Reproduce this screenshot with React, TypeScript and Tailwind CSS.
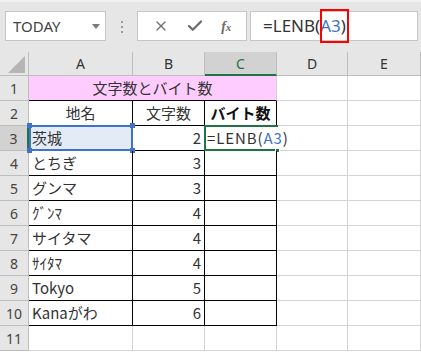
import React from "react";
import { X, Check } from "lucide-react";

const cellFont = { fontFamily: '"Noto Sans CJK JP", "Noto Sans", sans-serif' };
const uiFont = { fontFamily: '"Noto Sans", "Noto Sans CJK JP", sans-serif' };

const data: [string, string][] = [
  ["茨城", "2"],
  ["とちぎ", "3"],
  ["グンマ", "3"],
  ["ｸﾞﾝﾏ", "4"],
  ["サイタマ", "4"],
  ["ｻｲﾀﾏ", "4"],
  ["Tokyo", "5"],
  ["Kanaがわ", "6"],
];

function RowHead({ n, sel = false }: { n: number; sel?: boolean }) {
  return (
    <div
      className={
        sel
          ? "h-[25px] flex items-center justify-center bg-[#d2d2d2] border-b border-[#bdbdbd] border-r-2 border-r-[#217346] text-[14px] text-[#444]"
          : "h-[25px] flex items-center justify-center bg-[#e6e6e6] border-b border-r border-[#bdbdbd] text-[14px] text-[#444]"
      }
      style={uiFont}
    >
      {n}
    </div>
  );
}

export default function App() {
  return (
    <div className="w-[421px] h-[352px] overflow-hidden bg-white relative" style={uiFont}>
      {/* toolbar */}
      <div className="h-[52px] bg-[#e6e6e6] border-t-2 border-[#f2f2f2] flex items-start pt-[9px] pl-[5px]">
        <div className="w-[101px] h-[30px] bg-white border border-[#c6c6c6] flex items-center pl-[7px] pr-[5px] text-[15px] text-[#444]">
          <span className="flex-1">TODAY</span>
          <svg width="8" height="5" viewBox="0 0 8 5">
            <path d="M0 0 L8 0 L4 5 Z" fill="#7a7a7a" />
          </svg>
        </div>
        <div className="ml-[15px] mt-[10px] flex flex-col gap-[3px]">
          <div className="w-[2px] h-[2px] bg-[#9a9a9a]" />
          <div className="w-[2px] h-[2px] bg-[#9a9a9a]" />
          <div className="w-[2px] h-[2px] bg-[#9a9a9a]" />
        </div>
        <div className="ml-[14px] w-[110px] h-[30px] bg-white border border-[#c6c6c6] flex items-center justify-around px-[6px] text-[#6b6b6b]">
          <X size={16} strokeWidth={1.8} />
          <Check size={18} strokeWidth={3} />
          <span className="text-[14px] italic font-semibold" style={{ fontFamily: '"Liberation Serif", serif' }}>
            f<span className="text-[11px]">x</span>
          </span>
        </div>
        <div className="ml-[3px] w-[168px] h-[30px] bg-white border border-[#c6c6c6] relative flex items-center pl-[12px] text-[17px] text-[#333]">
          <span>=LENB(</span>
          <span className="text-[#3f73c8]">A3</span>
          <span>)</span>
          <span className="w-[1px] h-[18px] bg-black ml-[1px]" />
          <div className="absolute left-[69px] top-[-3px] w-[29px] h-[34px] border-2 border-[#ff0000]" />
        </div>
      </div>

      {/* sheet */}
      <div className="grid grid-cols-[29px_104px_72px_72px_71px_73px]" style={cellFont}>
        {/* header row */}
        <div className="h-[24px] bg-[#e6e6e6] border-r border-b border-[#bdbdbd] relative">
          <svg className="absolute right-[3px] bottom-[2px]" width="17" height="17" viewBox="0 0 17 17">
            <path d="M17 0 L17 17 L0 17 Z" fill="#b5b5b5" />
          </svg>
        </div>
        {["A", "B"].map((c) => (
          <div key={c} className="h-[24px] bg-[#e6e6e6] border-r border-b border-[#bdbdbd] flex items-center justify-center text-[14px] text-[#333]" style={uiFont}>
            {c}
          </div>
        ))}
        <div className="h-[24px] bg-[#d2d2d2] border-r border-[#bdbdbd] border-b-2 border-b-[#217346] flex items-center justify-center text-[14px] text-[#217346]" style={uiFont}>
          C
        </div>
        {["D", "E"].map((c) => (
          <div key={c} className="h-[24px] bg-[#e6e6e6] border-r border-b border-[#bdbdbd] flex items-center justify-center text-[14px] text-[#333]" style={uiFont}>
            {c}
          </div>
        ))}

        {/* row 1 */}
        <RowHead n={1} />
        <div className="col-span-3 h-[25px] bg-[#ffccff] border-b border-r border-b-black border-r-[#d4d4d4] flex items-center justify-center text-[15px] text-[#333]">
          文字数とバイト数
        </div>
        <div className="h-[25px] border-r border-b border-[#d4d4d4]" />
        <div className="h-[25px] border-r border-b border-[#d4d4d4]" />

        {/* row 2 */}
        <RowHead n={2} />
        <div className="h-[25px] border-r border-b border-black flex items-center justify-center text-[15px] text-[#333]">地名</div>
        <div className="h-[25px] border-r border-b border-black flex items-center justify-center text-[15px] text-[#333]">文字数</div>
        <div className="h-[25px] border-r border-b border-black flex items-center justify-center text-[15px] font-bold text-[#111]">バイト数</div>
        <div className="h-[25px] border-r border-b border-[#d4d4d4]" />
        <div className="h-[25px] border-r border-b border-[#d4d4d4]" />

        {/* data rows */}
        {data.map(([name, num], i) => {
          const r = i + 3;
          const first = i === 0;
          return (
            <React.Fragment key={r}>
              <RowHead n={r} sel={first} />
              <div className={"h-[25px] border-r border-b border-black flex items-center pl-[3px] text-[15px] text-[#333] whitespace-nowrap relative " + (first ? "bg-[#e3ebf7]" : "")}>
                {name}
                {first && (
                  <div className="absolute -top-[1px] left-0 -right-[1px] -bottom-[1px] border-2 border-[#3f73c8]">
                    <div className="absolute -left-[4px] -top-[4px] w-[5px] h-[5px] bg-[#3f73c8]" />
                    <div className="absolute -right-[4px] -top-[4px] w-[5px] h-[5px] bg-[#3f73c8]" />
                    <div className="absolute -left-[4px] -bottom-[4px] w-[5px] h-[5px] bg-[#3f73c8]" />
                    <div className="absolute -right-[4px] -bottom-[4px] w-[5px] h-[5px] bg-[#3f73c8]" />
                  </div>
                )}
              </div>
              <div className="h-[25px] border-r border-b border-black flex items-center justify-end pr-[3px] text-[15px] text-[#333]">
                {num}
              </div>
              <div className={"h-[25px] border-b border-black relative " + (first ? "" : "border-r")}>
                {first && (
                  <>
                    <div className="absolute -top-[1px] -left-[1px] -right-[1px] -bottom-[1px] border-2 border-r-0 border-[#217346]" />
                    <div className="absolute -right-[3px] -bottom-[3px] w-[5px] h-[5px] bg-[#217346] border border-white" />
                    <div className="absolute left-[2px] top-0 h-[24px] flex items-center whitespace-nowrap text-[15px] tracking-[0.9px] text-[#333] z-10">
                      =LENB(<span className="text-[#3f73c8]">A3</span>)
                    </div>
                  </>
                )}
              </div>
              <div className="h-[25px] border-r border-b border-[#d4d4d4]" />
              <div className="h-[25px] border-r border-b border-[#d4d4d4]" />
            </React.Fragment>
          );
        })}

        {/* row 11 */}
        <RowHead n={11} />
        <div className="h-[25px] border-r border-b border-[#d4d4d4]" />
        <div className="h-[25px] border-r border-b border-[#d4d4d4]" />
        <div className="h-[25px] border-r border-b border-[#d4d4d4]" />
        <div className="h-[25px] border-r border-b border-[#d4d4d4]" />
        <div className="h-[25px] border-r border-b border-[#d4d4d4]" />
      </div>
    </div>
  );
}
